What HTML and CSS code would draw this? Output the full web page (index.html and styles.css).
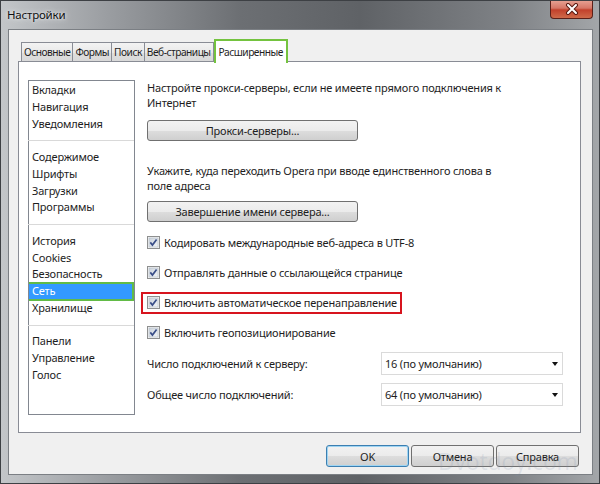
FILE: index.html
```html
<!DOCTYPE html>
<html lang="ru">
<head>
<meta charset="UTF-8">
<title>Настройки</title>
<link rel="stylesheet" href="styles.css">
</head>
<body>
<svg width="0" height="0" style="position:absolute">
  <defs>
    <linearGradient id="cbfill" x1="0" y1="0" x2="1" y2="1">
      <stop offset="0" stop-color="#cbd3dc"/>
      <stop offset="1" stop-color="#f4f6f8"/>
    </linearGradient>
    <symbol id="check" viewBox="0 0 13 13">
      <rect x="0.5" y="0.5" width="12" height="12" fill="#f4f4f4" stroke="#8e8f8f"/>
      <rect x="2" y="2" width="9" height="9" fill="url(#cbfill)" stroke="#b3bcc6" stroke-width="0.6"/>
      <path d="M3.3 6.4 L5.4 9 L9.6 3.4" fill="none" stroke="#3a4e88" stroke-width="1.7"/>
    </symbol>
  </defs>
</svg>

<div class="window">
  <!-- Title bar -->
  <div class="titlebar">
    <span class="title">Настройки</span>
    <div class="close">
      <svg width="14" height="12" viewBox="0 0 14 12">
        <path d="M3 2 L11 10 M11 2 L3 10" stroke="#5a1a12" stroke-width="4" stroke-linecap="round"/>
        <path d="M3 2 L11 10 M11 2 L3 10" stroke="#ffffff" stroke-width="2" stroke-linecap="round"/>
      </svg>
    </div>
  </div>

  <div class="client">
    <div class="tabs">
      <div class="tab">Основные</div>
      <div class="tab">Формы</div>
      <div class="tab">Поиск</div>
      <div class="tab">Веб-страницы</div>
      <div class="tab active">Расширенные</div>
    </div>

    <div class="panel">
      <ul class="nav">
        <li>Вкладки</li>
        <li>Навигация</li>
        <li>Уведомления</li>
        <li class="sep"></li>
        <li>Содержимое</li>
        <li>Шрифты</li>
        <li>Загрузки</li>
        <li>Программы</li>
        <li class="sep"></li>
        <li>История</li>
        <li>Cookies</li>
        <li>Безопасность</li>
        <li class="selected">Сеть</li>
        <li>Хранилище</li>
        <li class="sep"></li>
        <li>Панели</li>
        <li>Управление</li>
        <li>Голос</li>
      </ul>

      <div class="pane">
        <p class="desc first">Настройте прокси-серверы, если не имеете прямого подключения к<br>Интернет</p>
        <button class="wide first-btn">Прокси-серверы...</button>

        <p class="desc second">Укажите, куда переходить Opera при вводе единственного слова в<br>поле адреса</p>
        <button class="wide second-btn">Завершение имени сервера...</button>

        <div class="checks">
          <div class="check-row">
            <svg class="cb"><use href="#check"/></svg>
            <span>Кодировать международные веб-адреса в UTF-8</span>
          </div>
          <div class="check-row">
            <svg class="cb"><use href="#check"/></svg>
            <span>Отправлять данные о ссылающейся странице</span>
          </div>
          <div class="check-row">
            <div class="highlight">
              <svg class="cb"><use href="#check"/></svg>
              <span>Включить автоматическое перенаправление</span>
            </div>
          </div>
          <div class="check-row">
            <svg class="cb"><use href="#check"/></svg>
            <span>Включить геопозиционирование</span>
          </div>
        </div>

        <div class="selects">
          <div class="select-row">
            <span class="label">Число подключений к серверу:</span>
            <div class="select">16 (по умолчанию)<span class="arrow"></span></div>
          </div>
          <div class="select-row">
            <span class="label">Общее число подключений:</span>
            <div class="select">64 (по умолчанию)<span class="arrow"></span></div>
          </div>
        </div>
      </div>
    </div>

    <div class="footer">
      <button class="btn default">OK</button>
      <button class="btn">Отмена</button>
      <button class="btn">Справка</button>
    </div>
  </div>

  <div class="watermark">Dvotdoy.com</div>
</div>
</body>
</html>
```

FILE: styles.css
```css
body {
    margin: 0;
    font-family: "Noto Sans", "Open Sans", sans-serif;
    font-size: 11px;
    letter-spacing: -0.2px;
    color: #1e1e1e;
}
.window {
    position: relative;
    width: 600px;
    height: 484px;
    box-sizing: border-box;
    border: 1px solid #3d4044;
    background: linear-gradient(to right, #c3c6c9 0%, #9a9da1 18%, #6c6f73 40%, #5f6266 60%, #7f8286 85%, #a3a6a9 100%);
    overflow: hidden;
}
.titlebar {
    height: 28px;
    position: relative;
}
.title {
    position: absolute;
    left: 6px;
    top: 6px;
    font-size: 11.5px;
    color: #111;
    text-shadow: 0 0 6px #e8eaec, 0 0 3px #e8eaec;
}
.close {
    position: absolute;
    right: 6px;
    top: -1px;
    width: 41px;
    height: 18px;
    border: 1px solid #5b2019;
    border-top: none;
    border-radius: 0 0 4px 4px;
    background: linear-gradient(#e8a496 0%, #d67767 45%, #c2412c 55%, #cf6a4a 100%);
    display: flex;
    align-items: center;
    justify-content: center;
}
.client {
    margin: 0 6px 0 7px;
    height: 446px;
    box-sizing: border-box;
    background: #f0f0f0;
    border: 1px solid #7b7f84;
    padding: 0 0 0 9px;
}

/* Tabs */
.tabs {
    display: flex;
    height: 31px;
    align-items: flex-end;
    padding-left: 3px;
}
.tab {
    height: 19px;
    line-height: 18px;
    padding: 0 2px;
    font-size: 10.2px;
    letter-spacing: -0.5px;
    border: 1px solid #898c95;
    border-bottom: none;
    margin-right: -1px;
    background: linear-gradient(#f3f3f3, #e9e9e9 50%, #dedede 51%, #d8d8d8);
    position: relative;
    top: 1px;
}
.tab.active {
    height: 22px;
    line-height: 22px;
    padding: 0 3px;
    background: #fff;
    border: 2px solid #74c33f;
    border-bottom: none;
    margin-left: 1px;
    z-index: 2;
    top: 2px;
}

.panel {
    width: 563px;
    height: 372px;
    box-sizing: border-box;
    background: #fff;
    border: 1px solid #898c95;
    padding: 18px 0 0 9px;
    display: flex;
    align-items: flex-start;
    position: relative;
    z-index: 1;
}

/* Left list */
.nav {
    list-style: none;
    margin: 0;
    padding: 1px 0 0 0;
    width: 107px;
    height: 335px;
    box-sizing: border-box;
    border: 1px solid #828790;
    flex-shrink: 0;
}
.nav li {
    height: 16.76px;
    line-height: 16.76px;
    padding-left: 3px;
}
.nav li.sep {
    position: relative;
}
.nav li.sep::after {
    content: "";
    position: absolute;
    left: -1px;
    right: 0;
    top: 8px;
    border-top: 1px solid #d9d9d9;
}
.nav li.selected {
    box-sizing: border-box;
    height: 18.76px;
    line-height: 14.76px;
    margin: -1px 0;
    background: #3399ff;
    color: #fff;
    border-top: 2px solid #62bb46;
    border-bottom: 2px solid #62bb46;
    border-right: 2px solid #62bb46;
}

/* Right pane */
.pane {
    margin-left: 12px;
    width: 416px;
}
.desc {
    margin: 0;
    line-height: 14.7px;
}
.desc.first {
    margin-top: 1px;
}
.desc.second {
    margin-top: 23px;
}
button {
    font: inherit;
    letter-spacing: inherit;
    color: #1e1e1e;
}
.wide {
    display: block;
    width: 211px;
    height: 21px;
    padding: 0;
    border: 1px solid #707070;
    border-radius: 3px;
    background: linear-gradient(#f2f2f2, #ebebeb 50%, #dddddd 51%, #cfcfcf);
}
.first-btn {
    margin-top: 10px;
}
.second-btn {
    margin-top: 7px;
}
.checks {
    margin-top: 6px;
}
.check-row {
    height: 30px;
    display: flex;
    align-items: center;
}
.cb {
    width: 13px;
    height: 13px;
    margin-right: 4px;
    flex-shrink: 0;
}
.highlight {
    display: flex;
    align-items: center;
    height: 18px;
    margin-left: -6px;
    padding: 0 3px 0 4px;
    border: 2px solid #d7141e;
}
.selects {
    margin-top: 4px;
    display: flex;
    flex-direction: column;
    gap: 8px;
}
.select-row {
    display: flex;
    align-items: center;
    height: 23px;
}
.label {
    width: 234px;
}
.select {
    position: relative;
    width: 182px;
    height: 23px;
    line-height: 22px;
    box-sizing: border-box;
    border: 1px solid #dadada;
    padding-left: 3px;
}
.arrow {
    position: absolute;
    right: 4px;
    top: 9px;
    border-left: 3.5px solid transparent;
    border-right: 3.5px solid transparent;
    border-top: 4px solid #111;
}

/* Bottom buttons */
.footer {
    display: flex;
    justify-content: flex-end;
    gap: 2px;
    margin-top: 12px;
    padding-right: 13px;
}
.btn {
    width: 83px;
    height: 22px;
    padding: 0;
    border: 1px solid #707070;
    border-radius: 3px;
    background: linear-gradient(#f2f2f2, #ebebeb 50%, #dddddd 51%, #cfcfcf);
}
.btn.default {
    border-color: #3c7fb1;
    box-shadow: inset 0 0 0 1px #9fd5f3;
}
.watermark {
    position: absolute;
    left: 437px;
    top: 444px;
    font-size: 23px;
    color: rgba(120, 140, 170, 0.16);
    font-family: "Open Sans", sans-serif;
    pointer-events: none;
}
```
